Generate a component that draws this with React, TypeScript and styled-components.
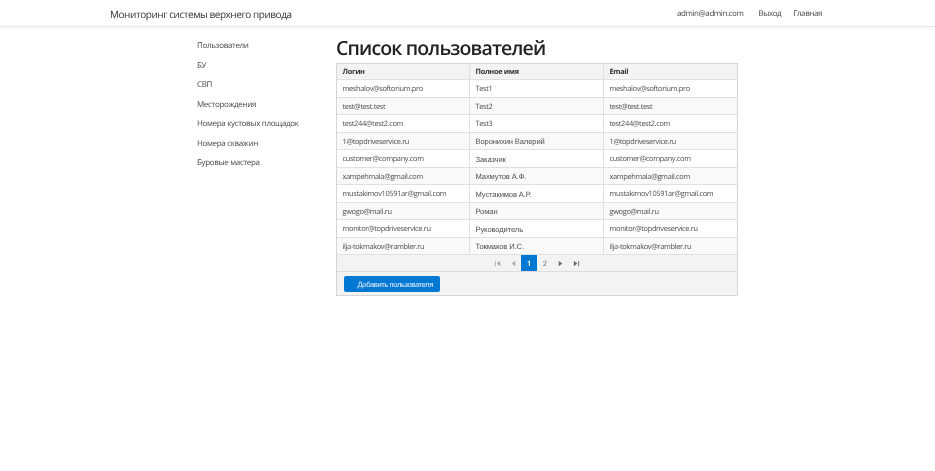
import React from "react";
import styled, { createGlobalStyle } from "styled-components";

const Global = createGlobalStyle`
  html, body { margin: 0; padding: 0; background: #fff; }
  body {
    font-family: "Open Sans", "Liberation Sans", sans-serif;
    color: #444;
    text-rendering: geometricPrecision;
  }
`;

const Page = styled.div`
  background: #fff;
  min-height: 471px;
  filter: blur(0.3px);
`;
const Navbar = styled.header`
  height: 27px;
  display: flex;
  align-items: center;
  padding: 1px 113px 0 110px;
  box-sizing: border-box;
  border-bottom: 1px solid #e7e7e7;
  box-shadow: 0 1px 3px rgba(0, 0, 0, 0.06);
`;
const Brand = styled.div`
  font-size: 10px;
  letter-spacing: -0.45px;
  color: #333;
  flex: 1;
`;
const NavLink = styled.a<{ $gap: number }>`
  font-size: 8px;
  letter-spacing: -0.42px;
  color: #4a4a4a;
  margin-left: ${(p) => p.$gap}px;
`;
const Body = styled.div`
  display: flex;
  padding-left: 197px;
`;
const Sidebar = styled.nav`
  width: 139px;
  padding-top: 9px;
  display: flex;
  flex-direction: column;
`;
const SideLink = styled.a`
  font-size: 8px;
  letter-spacing: -0.33px;
  line-height: 19.5px;
  color: #4a4a4a;
  white-space: nowrap;
`;
const Main = styled.main`
  width: 402px;
`;
const Title = styled.h1`
  margin: 0;
  height: 36px;
  padding-top: 7px;
  box-sizing: border-box;
  font-size: 19.5px;
  letter-spacing: -0.85px;
  line-height: 27px;
  font-weight: 600;
  color: #222;
  white-space: nowrap;
`;
const Grid = styled.div`
  border: 1px solid #d5d5d5;
  background: #f3f3f3;
`;
const Row = styled.div<{ $alt?: boolean; $head?: boolean }>`
  display: grid;
  grid-template-columns: 132px 134px 1fr;
  height: ${(p) => (p.$head ? "16px" : "17.5px")};
  box-sizing: border-box;
  border-bottom: 1px solid #e0e0e0;
  background: ${(p) => (p.$head ? "#f3f3f3" : p.$alt ? "#f9f9f9" : "#fff")};
`;
const Cell = styled.div<{ $head?: boolean; $arial?: boolean }>`
  display: flex;
  align-items: center;
  padding: ${(p) => (p.$head ? "1px" : "2px")} 0 0 5.5px;
  font-family: ${(p) => (p.$arial ? '"Liberation Sans", sans-serif' : '"Open Sans", sans-serif')};
  font-size: ${(p) => (p.$arial ? "7.6px" : "7.4px")};
  letter-spacing: ${(p) => (p.$arial ? "-0.12px" : "-0.33px")};
  font-weight: ${(p) => (p.$head ? 700 : 400)};
  color: ${(p) => (p.$head ? "#333" : "#4f4f4f")};
  border-left: 1px solid #e0e0e0;
  white-space: nowrap;
  &:first-child { border-left: 0; }
`;
const Pager = styled.div`
  height: 17px;
  box-sizing: border-box;
  display: flex;
  justify-content: center;
  align-items: stretch;
  border-bottom: 1px solid #dcdcdc;
`;
const PageBtn = styled.span<{ $active?: boolean }>`
  width: 15.7px;
  display: flex;
  align-items: center;
  justify-content: center;
  font-family: "Roboto", sans-serif;
  font-size: 7.4px;
  font-weight: ${(p) => (p.$active ? 700 : 400)};
  background: ${(p) => (p.$active ? "#0078d4" : "transparent")};
  color: ${(p) => (p.$active ? "#fff" : "#777")};
`;
const Toolbar = styled.div`
  height: 23px;
  padding: 4px 6.5px 0;
  box-sizing: border-box;
`;
const AddButton = styled.button`
  width: 96px;
  height: 16px;
  border: 0;
  border-radius: 2px;
  padding: 0 0 0 14px;
  background: #0078d4;
  color: #e8f2fb;
  font-family: "Liberation Sans", sans-serif;
  font-size: 7.6px;
  letter-spacing: -0.4px;
  text-align: left;
  white-space: nowrap;
  display: block;
  text-rendering: geometricPrecision;
`;

const Icon = ({ d, color = "#777" }: { d: string; color?: string }) => (
  <svg width="7" height="7" viewBox="0 0 8 8" fill={color}>
    <path d={d} />
  </svg>
);

const users: [string, string, boolean?][] = [
  ["meshalov@softorium.pro", "Test1"],
  ["test@test.test", "Test2"],
  ["test244@test2.com", "Test3"],
  ["1@topdriveservice.ru", "Воронихин Валерий", true],
  ["customer@company.com", "Заказчик", true],
  ["xampehmala@gmail.com", "Махмутов А.Ф.", true],
  ["mustakimov10591ar@gmail.com", "Мустакимов А.Р.", true],
  ["gwogo@mail.ru", "Роман", true],
  ["monitor@topdriveservice.ru", "Руководитель", true],
  ["ilja-tokmakov@rambler.ru", "Токмаков И.С.", true],
];

const side = [
  "Пользователи",
  "БУ",
  "СВП",
  "Месторождения",
  "Номера кустовых площадок",
  "Номера скважин",
  "Буровые мастера",
];

export default function App() {
  return (
    <Page>
      <Global />
      <Navbar>
        <Brand>Мониторинг системы верхнего привода</Brand>
        <NavLink $gap={0}>admin@admin.com</NavLink>
        <NavLink $gap={15}>Выход</NavLink>
        <NavLink $gap={12}>Главная</NavLink>
      </Navbar>
      <Body>
        <Sidebar>
          {side.map((s) => (
            <SideLink key={s}>{s}</SideLink>
          ))}
        </Sidebar>
        <Main>
          <Title>Список пользователей</Title>
          <Grid>
            <Row $head>
              <Cell $head>Логин</Cell>
              <Cell $head>Полное имя</Cell>
              <Cell $head>Email</Cell>
            </Row>
            {users.map(([mail, name, ar], i) => (
              <Row key={mail} $alt={i % 2 === 1}>
                <Cell>{mail}</Cell>
                <Cell $arial={ar}>{name}</Cell>
                <Cell>{mail}</Cell>
              </Row>
            ))}
            <Pager>
              <PageBtn><Icon color="#aaa" d="M1 1h1v6H1zM7 1v6L3 4z" /></PageBtn>
              <PageBtn><Icon color="#aaa" d="M6 1v6L2 4z" /></PageBtn>
              <PageBtn $active>1</PageBtn>
              <PageBtn>2</PageBtn>
              <PageBtn><Icon color="#666" d="M2 1v6l4-3z" /></PageBtn>
              <PageBtn><Icon color="#666" d="M1 1v6l4-3zM6 1h1v6H6z" /></PageBtn>
            </Pager>
            <Toolbar>
              <AddButton>Добавить пользователя</AddButton>
            </Toolbar>
          </Grid>
        </Main>
      </Body>
    </Page>
  );
}
